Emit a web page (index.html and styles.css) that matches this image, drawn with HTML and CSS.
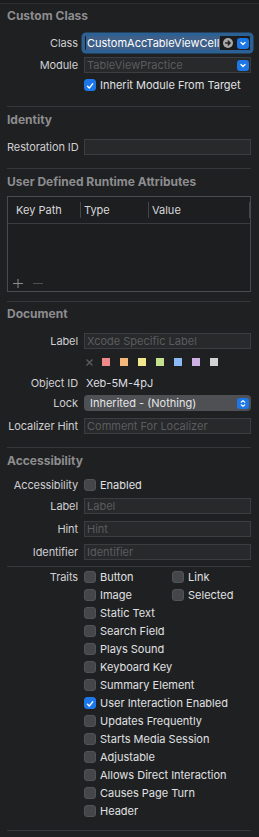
FILE: index.html
```html
<!DOCTYPE html>
<html>
<head>
<meta charset="utf-8">
<link rel="stylesheet" href="styles.css">
</head>
<body>
<div class="panel">
  <div class="topbar"></div>

  <section class="sec">
    <h2 class="head mt4">Custom Class</h2>
    <div class="row mt12">
      <span class="lbl">Class</span>
      <div class="field focus">
        <span class="sel">CustomAccTableViewCell</span>
        <span class="goto"><svg width="10" height="10" viewBox="0 0 10 10"><circle cx="5" cy="5" r="5" fill="#a9a9ab"/><path d="M2.6 5H7.2M5.2 3L7.2 5L5.2 7" stroke="#1f2022" stroke-width="1.3" fill="none" stroke-linecap="round" stroke-linejoin="round"/></svg></span>
        <span class="btn"><svg width="12" height="11" viewBox="0 0 12 11"><path d="M4 4.5L6 6.5L8 4.5" stroke="#fff" stroke-width="1.3" fill="none" stroke-linecap="round" stroke-linejoin="round"/></svg></span>
      </div>
    </div>
    <div class="row mt6">
      <span class="lbl">Module</span>
      <div class="field">
        <span class="ph">TableViewPractice</span>
        <span class="btn"><svg width="12" height="11" viewBox="0 0 12 11"><path d="M4 4.5L6 6.5L8 4.5" stroke="#fff" stroke-width="1.3" fill="none" stroke-linecap="round" stroke-linejoin="round"/></svg></span>
      </div>
    </div>
    <div class="row h14 mt5">
      <span></span>
      <span class="check"><span class="cb on"><svg width="12" height="12" viewBox="0 0 12 12"><path d="M3 6.3L5.1 8.5L9.2 3.4" stroke="#fff" stroke-width="1.7" fill="none" stroke-linecap="round" stroke-linejoin="round"/></svg></span>Inherit Module From Target</span>
    </div>
    <div class="divider mt14"></div>
  </section>

  <section class="sec">
    <h2 class="head mt5">Identity</h2>
    <div class="row mt12">
      <span class="lbl">Restoration ID</span>
      <div class="field"></div>
    </div>
    <div class="divider mt13"></div>
  </section>

  <section class="sec">
    <h2 class="head mt5">User Defined Runtime Attributes</h2>
    <div class="kv mt7">
      <div class="kv-head">
        <span class="kv-col c1">Key Path</span><span class="kv-sep"></span>
        <span class="kv-col">Type</span><span class="kv-sep"></span>
        <span class="kv-col">Value</span><span class="kv-sep"></span>
      </div>
      <div class="kv-body"></div>
      <div class="kv-foot">
        <svg class="plus" width="10" height="9" viewBox="0 0 10 9"><path d="M5 0V9M0 4.5H10" stroke="#8c8c8e" stroke-width="1"/></svg>
        <svg class="minus" width="10" height="9" viewBox="0 0 10 9"><path d="M0 4.5H10" stroke="#4f5052" stroke-width="1"/></svg>
      </div>
    </div>
    <div class="divider mt9"></div>
  </section>

  <section class="sec">
    <h2 class="head mt4">Document</h2>
    <div class="row mt12">
      <span class="lbl">Label</span>
      <div class="field"><span class="ph">Xcode Specific Label</span></div>
    </div>
    <div class="row h8 mt9">
      <span></span>
      <div class="swatches">
        <svg class="xmark" width="7" height="7" viewBox="0 0 7 7"><path d="M0.5 0.5L6.5 6.5M6.5 0.5L0.5 6.5" stroke="#5d5e60" stroke-width="1.2"/></svg>
        <span class="sw sw-red"></span>
        <span class="sw sw-orange"></span>
        <span class="sw sw-yellow"></span>
        <span class="sw sw-green"></span>
        <span class="sw sw-blue"></span>
        <span class="sw sw-purple"></span>
        <span class="sw sw-gray"></span>
      </div>
    </div>
    <div class="row h14 mt10">
      <span class="lbl">Object ID</span>
      <span class="value">Xeb-5M-4pJ</span>
    </div>
    <div class="row mt5">
      <span class="lbl">Lock</span>
      <div class="popup">
        <span class="popup-text">Inherited - (Nothing)</span>
        <span class="stepper"><svg width="12" height="11" viewBox="0 0 12 11"><path d="M4.2 4.2L6 2.6L7.8 4.2M4.2 6.8L6 8.4L7.8 6.8" stroke="#fff" stroke-width="1.2" fill="none" stroke-linecap="round" stroke-linejoin="round"/></svg></span>
      </div>
    </div>
    <div class="row mt7">
      <span class="lbl">Localizer Hint</span>
      <div class="field"><span class="ph">Comment For Localizer</span></div>
    </div>
    <div class="divider mt13"></div>
  </section>

  <section class="sec">
    <h2 class="head mt5">Accessibility</h2>
    <div class="row h14 mt10">
      <span class="lbl">Accessibility</span>
      <span class="check"><span class="cb"></span>Enabled</span>
    </div>
    <div class="row mt6">
      <span class="lbl">Label</span>
      <div class="field"><span class="ph">Label</span></div>
    </div>
    <div class="row mt7">
      <span class="lbl">Hint</span>
      <div class="field"><span class="ph">Hint</span></div>
    </div>
    <div class="row mt7">
      <span class="lbl">Identifier</span>
      <div class="field"><span class="ph">Identifier</span></div>
    </div>
    <div class="divider mt6"></div>
  </section>

  <section class="sec">
    <div class="row traits mt1">
      <span class="lbl tlbl">Traits</span>
      <div class="tgrid">
        <span class="check"><span class="cb"></span>Button</span>
        <span class="check"><span class="cb"></span>Link</span>
        <span class="check"><span class="cb"></span>Image</span>
        <span class="check"><span class="cb"></span>Selected</span>
        <span class="check full"><span class="cb"></span>Static Text</span>
        <span class="check full"><span class="cb"></span>Search Field</span>
        <span class="check full"><span class="cb"></span>Plays Sound</span>
        <span class="check full"><span class="cb"></span>Keyboard Key</span>
        <span class="check full"><span class="cb"></span>Summary Element</span>
        <span class="check full"><span class="cb on"><svg width="12" height="12" viewBox="0 0 12 12"><path d="M3 6.3L5.1 8.5L9.2 3.4" stroke="#fff" stroke-width="1.7" fill="none" stroke-linecap="round" stroke-linejoin="round"/></svg></span>User Interaction Enabled</span>
        <span class="check full"><span class="cb"></span>Updates Frequently</span>
        <span class="check full"><span class="cb"></span>Starts Media Session</span>
        <span class="check full"><span class="cb"></span>Adjustable</span>
        <span class="check full"><span class="cb"></span>Allows Direct Interaction</span>
        <span class="check full"><span class="cb"></span>Causes Page Turn</span>
        <span class="check full"><span class="cb"></span>Header</span>
      </div>
    </div>
    <div class="divider mt10"></div>
  </section>
</div>
</body>
</html>
```

FILE: styles.css
```css
html, body {
  margin: 0;
  padding: 0;
  background: #1f2022;
}
body {
  width: 259px;
  height: 837px;
  overflow: hidden;
  font-family: Inter, "Liberation Sans", sans-serif;
  font-size: 11px;
  color: #d6d6d6;
}
.panel {
  width: 259px;
}
.topbar {
  height: 3px;
  background: #1b1c1e;
  border-bottom: 1px solid #2e2f31;
}
.sec {
  padding: 0 8px 0 7px;
  display: flex;
  flex-direction: column;
}
.head {
  margin: 0;
  font-size: 12px;
  line-height: 15px;
  height: 15px;
  font-weight: 700;
  color: #8d8d8f;
  letter-spacing: 0;
}
.mt1 { margin-top: 1px; }
.mt4 { margin-top: 4px; }
.mt5 { margin-top: 5px; }
.mt6 { margin-top: 6px; }
.mt7 { margin-top: 7px; }
.mt9 { margin-top: 9px; }
.mt10 { margin-top: 10px; }
.mt12 { margin-top: 12px; }
.mt13 { margin-top: 13px; }
.mt14 { margin-top: 14px; }

.divider {
  height: 1px;
  background: #36373a;
}

.row {
  display: grid;
  grid-template-columns: 71px 167px;
  column-gap: 6px;
  align-items: center;
  height: 16px;
}
.row.h14 { height: 14px; }
.row.h8 { height: 8px; }
.lbl {
  text-align: right;
  color: #cfcfd1;
  white-space: nowrap;
  line-height: 14px;
  letter-spacing: -0.1px;
}

.field {
  box-sizing: border-box;
  height: 16px;
  background: #28292b;
  border: 1px solid #3c3d40;
  display: flex;
  align-items: center;
  padding-left: 2px;
  overflow: hidden;
}
.field .ph {
  color: #5b5c5e;
  line-height: 14px;
  white-space: nowrap;
  flex: 1;
}
.field .btn {
  width: 12px;
  height: 11px;
  border-radius: 3px;
  background: #1d77e6;
  margin-right: 1px;
  display: flex;
  flex: none;
}
.field.focus {
  background: #1c1c1e;
  border-color: #2b6194;
  border-radius: 2px;
  box-shadow: 0 0 0 2.5px #2b6194;
  padding-left: 1px;
}
.sel {
  background: #3d5f88;
  color: #ffffff;
  line-height: 14px;
  height: 14px;
  padding: 0 1px;
  white-space: nowrap;
}
.goto {
  width: 10px;
  height: 10px;
  display: flex;
  margin-left: 3px;
  flex: none;
}
.focus .btn {
  margin-left: auto;
}

.check {
  display: flex;
  align-items: center;
  gap: 4px;
  color: #e0e0e2;
  white-space: nowrap;
  line-height: 14px;
}
.cb {
  width: 12px;
  height: 12px;
  box-sizing: border-box;
  border-radius: 3px;
  background: #454649;
  border: 0.5px solid #525356;
  display: flex;
  flex: none;
}
.cb.on {
  background: #1c78ea;
  border-color: #1c78ea;
}

.kv {
  box-sizing: border-box;
  width: 244px;
  height: 96px;
  border: 1px solid #4a4b4e;
  background: #1d1e20;
  display: flex;
  flex-direction: column;
}
.kv-head {
  height: 26px;
  border-bottom: 1px solid #3a3b3e;
  display: grid;
  grid-template-columns: 72px 1px 67px 1px 100px 1px;
  align-items: center;
}
.kv-col {
  color: #d8d8da;
  padding-left: 3px;
  line-height: 14px;
}
.kv-col.c1 {
  padding-left: 8px;
}
.kv-sep {
  height: 16px;
  background: #45464a;
}
.kv-body {
  flex: 1;
}
.kv-foot {
  height: 17px;
  box-sizing: border-box;
  padding-top: 5px;
  display: flex;
  align-items: flex-start;
  padding-left: 5px;
  gap: 10px;
}

.swatches {
  display: flex;
  align-items: center;
  gap: 10px;
  padding-left: 2px;
  height: 8px;
}
.xmark {
  margin-right: -1px;
  flex: none;
}
.sw {
  width: 8px;
  height: 8px;
  flex: none;
}
.sw-red { background: #ef8a8a; }
.sw-orange { background: #f4b87c; }
.sw-yellow { background: #f3e68c; }
.sw-green { background: #c4df8e; }
.sw-blue { background: #8cbaf4; }
.sw-purple { background: #cdb1e5; }
.sw-gray { background: #d2d2d4; }

.value {
  color: #dedee0;
  padding-left: 2px;
  line-height: 14px;
}

.popup {
  box-sizing: border-box;
  height: 16px;
  border-radius: 4px;
  background: #4f5053;
  display: flex;
  align-items: center;
  padding-left: 6px;
}
.popup-text {
  color: #e6e6e8;
  flex: 1;
  white-space: nowrap;
  line-height: 14px;
}
.stepper {
  width: 12px;
  height: 11px;
  border-radius: 3px;
  background: #1d77e6;
  margin-right: 2px;
  display: flex;
}

.row.traits {
  height: auto;
  align-items: start;
}
.tlbl {
  line-height: 18px;
}
.tgrid {
  display: grid;
  grid-template-columns: 88px 1fr;
  grid-auto-rows: 18px;
  align-items: center;
}
.tgrid .full {
  grid-column: 1 / 3;
}
```
